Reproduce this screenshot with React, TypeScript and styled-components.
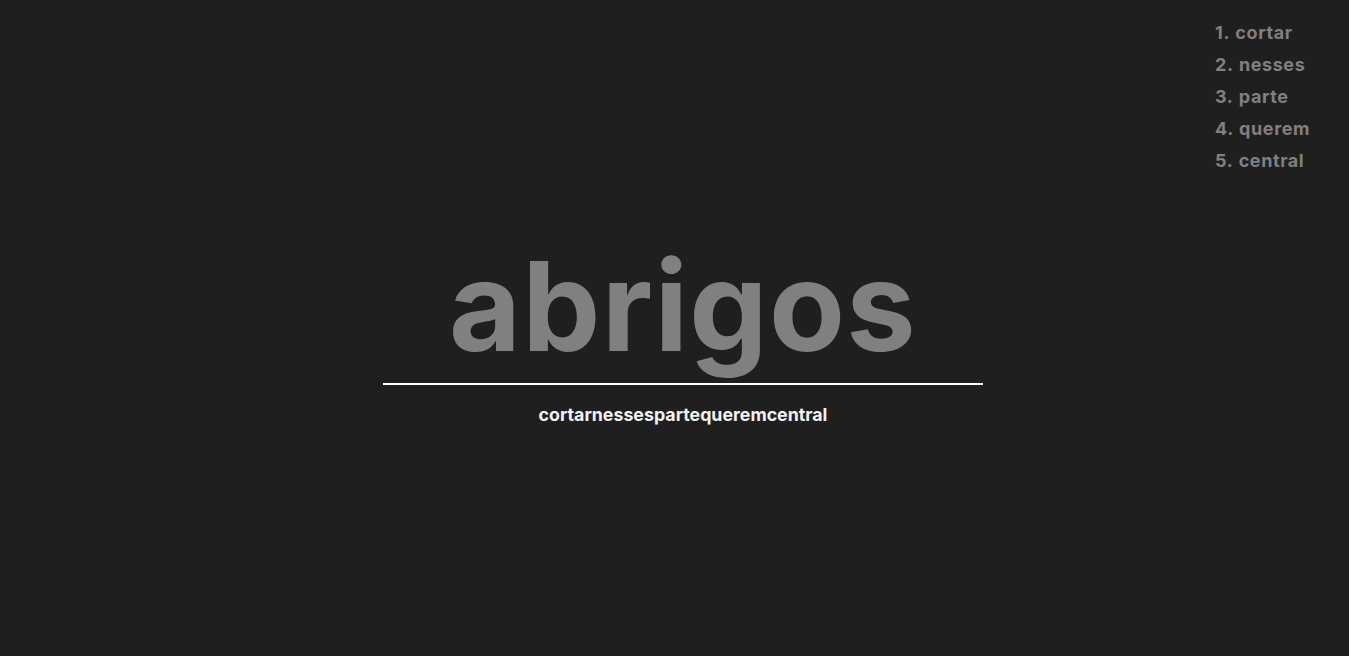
import * as React from 'react'
import styled, { createGlobalStyle } from 'styled-components'

const WORD = 'abrigos'
const OPTIONS = ['cortar', 'nesses', 'parte', 'querem', 'central']

const GlobalStyle = createGlobalStyle`
  html, body {
    margin: 0;
    padding: 0;
    background: #1f1f1f;
    font-family: Inter, 'Noto Sans', sans-serif;
    overflow: hidden;
  }
`

const Page = styled.div`
  display: grid;
  height: 100vh;
  padding-left: 17px;
`

const Main = styled.main`
  grid-area: 1 / 1;
  align-self: start;
  justify-self: center;
  display: flex;
  flex-direction: column;
  align-items: center;
  padding-top: 231px;
`

const Word = styled.h1`
  margin: 0;
  color: #808080;
  font-size: 124px;
  font-weight: 700;
  line-height: 150px;
  letter-spacing: 1.3px;
`

const Rule = styled.div`
  width: 600px;
  height: 2px;
  background: #fff;
  margin-top: 2px;
`

const Typed = styled.div`
  margin-top: 19px;
  color: #f2f2f2;
  font-size: 17.8px;
  font-weight: 700;
`

const List = styled.ol`
  grid-area: 1 / 1;
  align-self: start;
  justify-self: end;
  margin: 0;
  padding: 17px 40px 0 0;
  list-style: none;
  width: 94px;
`

const Item = styled.li`
  color: #808080;
  font-size: 18px;
  font-weight: 700;
  line-height: 32px;
  letter-spacing: 0.6px;
  word-spacing: 1px;
  white-space: nowrap;
`

export default function App() {
  return (
    <>
      <GlobalStyle />
      <Page>
        <Main>
          <Word>{WORD}</Word>
          <Rule />
          <Typed>{OPTIONS.join('')}</Typed>
        </Main>
        <List>
          {OPTIONS.map((w, i) => (
            <Item key={w}>
              {i + 1}. {w}
            </Item>
          ))}
        </List>
      </Page>
    </>
  )
}
